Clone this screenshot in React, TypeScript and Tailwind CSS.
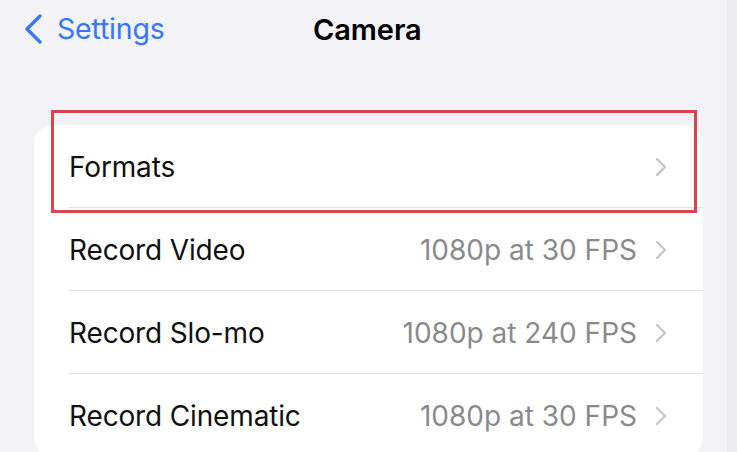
import React from "react";

const rows = [
  { label: "Formats", value: "" },
  { label: "Record Video", value: "1080p at 30 FPS" },
  { label: "Record Slo-mo", value: "1080p at 240 FPS" },
  { label: "Record Cinematic", value: "1080p at 30 FPS" },
];

function Chevron() {
  return (
    <svg width="12" height="20" viewBox="0 0 12 20" fill="none" className="shrink-0">
      <path d="M2 2 L10 10 L2 18" stroke="#c4c4c7" strokeWidth="2.2" strokeLinecap="round" strokeLinejoin="round" />
    </svg>
  );
}

export default function App() {
  return (
    <div
      className="w-[737px] h-[452px] overflow-hidden flex bg-[#f2f2f7]"
      style={{ fontFamily: "Inter, 'Liberation Sans', sans-serif" }}
    >
      <div className="flex-1 flex flex-col min-h-0">
        <div className="h-[58px] shrink-0 relative flex items-center">
          <div className="flex items-center pl-[23px] text-[#3478f6]">
            <svg width="20" height="30" viewBox="0 0 20 30" fill="none">
              <path d="M17 2 L4 15 L17 28" stroke="#3478f6" strokeWidth="3.2" strokeLinecap="round" strokeLinejoin="round" />
            </svg>
            <span className="ml-[14px] text-[28.5px] leading-none tracking-[-0.2px]">Settings</span>
          </div>
          <div className="absolute left-[313px] top-0 h-full flex items-center text-[29px] font-semibold text-black leading-none tracking-[-0.1px]">
            Camera
          </div>
        </div>
        <div className="shrink-0 pt-[67px] pl-[34px] pr-[24px]">
          <div className="relative bg-white rounded-[20px]">
            {rows.map((r, i) => (
              <div key={r.label} className="pl-[35px]">
                <div
                  className={`h-[83px] flex items-center pr-[36px] pt-[1px] ${
                    i < rows.length - 1 ? "border-b border-[#e1e1e6]" : ""
                  }`}
                >
                  <span className="text-[28px] text-[#111] tracking-[-0.15px] flex-1">{r.label}</span>
                  {r.value && (
                    <span className="text-[28px] text-[#8a8a8e] tracking-[0px] mr-[18px]">{r.value}</span>
                  )}
                  {!r.value && <span className="mr-[18px]" />}
                  <Chevron />
                </div>
              </div>
            ))}
            <div className="absolute left-[17px] right-[6px] top-[-15px] h-[103px] border-[3px] border-[#d9444f] pointer-events-none" />
          </div>
        </div>
      </div>
      <div className="w-[10px] bg-[#ebebf0]" />
    </div>
  );
}
